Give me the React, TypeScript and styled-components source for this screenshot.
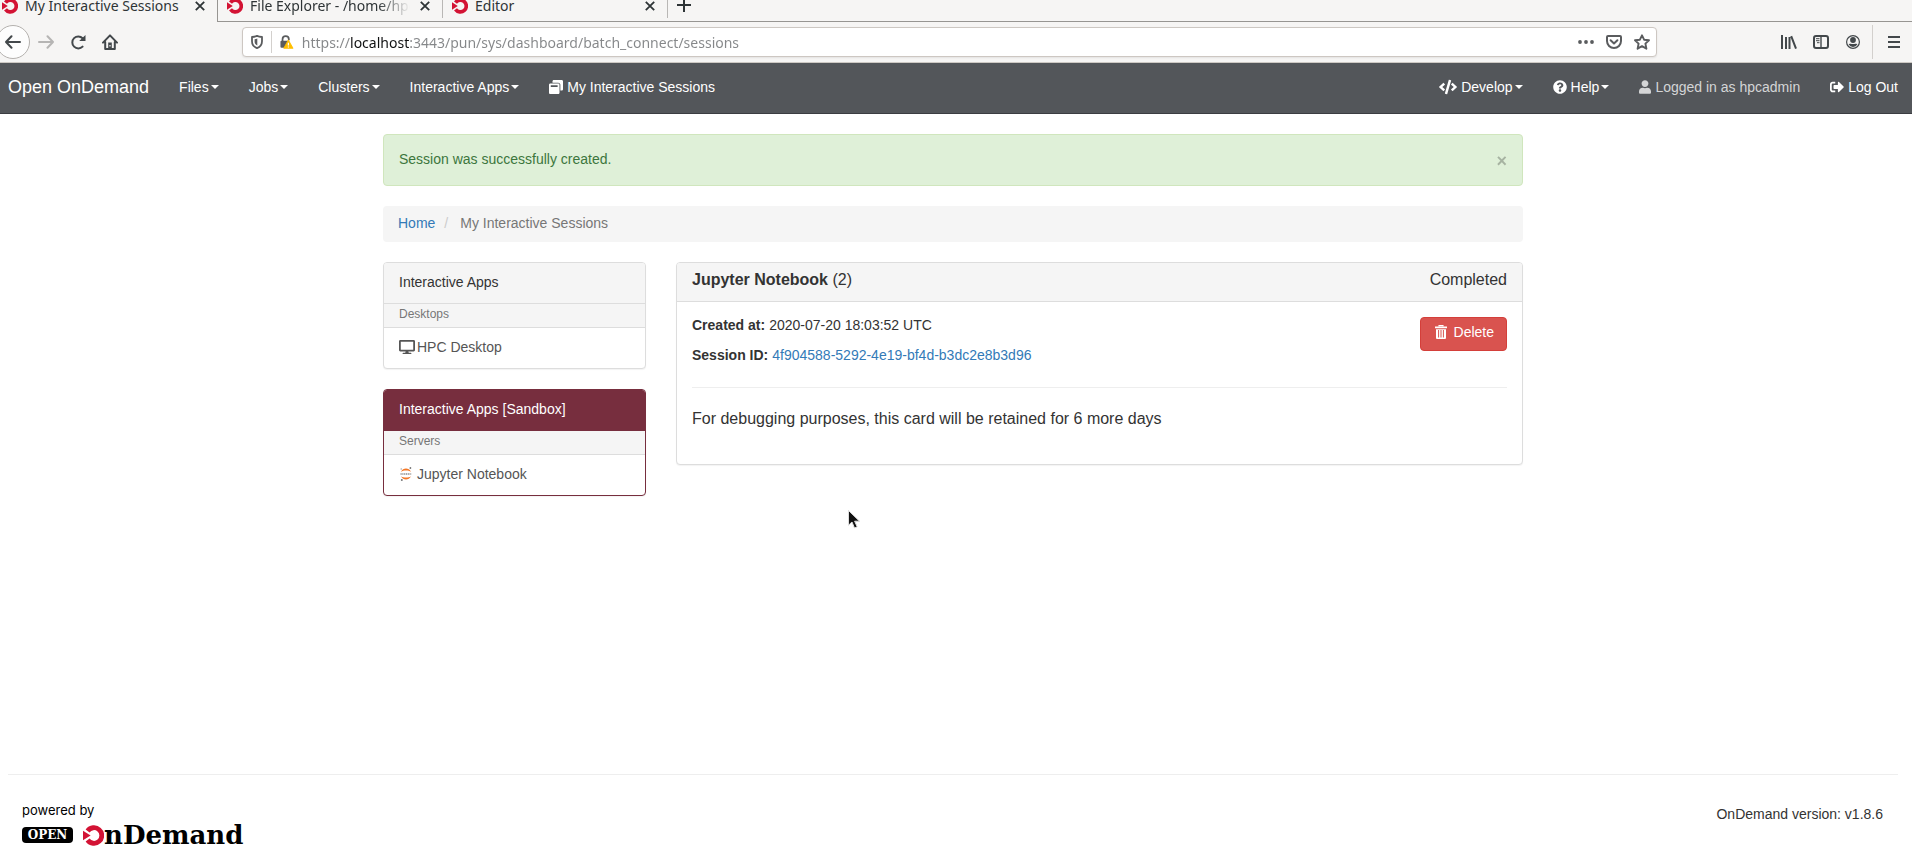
import React from "react";
import styled, { createGlobalStyle } from "styled-components";
import {
  FaCode,
  FaDesktop,
  FaQuestionCircle,
  FaSignOutAlt,
  FaUser,
  FaWindowRestore,
} from "react-icons/fa";

const GlobalStyle = createGlobalStyle`
  *, *::before, *::after { box-sizing: border-box; }
  body {
    margin: 0;
    background: #fff;
    color: #333;
    font-family: "Liberation Sans", Arial, sans-serif;
    font-size: 14px;
    line-height: 20px;
  }
  a { color: #337ab7; text-decoration: none; }
  svg { display: block; flex: none; }
  p, h1, h2, h3, ul, ol, dl, dd { margin: 0; padding: 0; list-style: none; }
  button, input { font: inherit; }
`;

const Shell = styled.div`
  position: relative;
  min-height: 100vh;
  display: flex;
  flex-direction: column;
`;

/* ---------- browser chrome ---------- */

const Chrome = styled.header`
  background: #f6f5f4;
  border-bottom: 1px solid #cdc9c4;
  color: #2e3436;
  font-family: "Noto Sans", "Open Sans", sans-serif;
  font-size: 14px;
`;

const TabStrip = styled.div`
  height: 22px;
  display: flex;
`;

const Tab = styled.div<{ $active?: boolean }>`
  position: relative;
  width: ${(p) => (p.$active ? 218 : 225)}px;
  padding: 0 10px 7px ${(p) => (p.$active ? 2 : 9)}px;
  display: flex;
  align-items: flex-end;
  gap: 7px;
  border-bottom: 1px solid ${(p) => (p.$active ? "transparent" : "#979592")};
  &::after {
    content: "";
    position: absolute;
    right: 0;
    top: 0;
    width: 1px;
    height: ${(p) => (p.$active ? 22 : 18)}px;
    background: ${(p) => (p.$active ? "#979592" : "#b9b7b5")};
  }
`;

const TabTitle = styled.span<{ $faded?: boolean }>`
  flex: 1;
  min-width: 0;
  white-space: nowrap;
  line-height: 20px;
  margin-bottom: -2px;
  ${(p) =>
    p.$faded
      ? "overflow: hidden; mask-image: linear-gradient(to right, #000 calc(100% - 32px), transparent);"
      : ""}
`;

const TabFill = styled.div`
  flex: 1;
  padding: 0 0 9px 8px;
  display: flex;
  align-items: flex-end;
  border-bottom: 1px solid #979592;
`;

const IconButton = styled.button<{ $w?: number; $h?: number }>`
  width: ${(p) => p.$w ?? 16}px;
  height: ${(p) => p.$h ?? 16}px;
  padding: 0;
  border: 0;
  background: none;
  color: inherit;
  display: flex;
  align-items: center;
  justify-content: center;
`;

const Toolbar = styled.div`
  height: 40px;
  padding-right: 8px;
  display: flex;
  align-items: center;
`;

const ToolGroup = styled.div<{ $gap: number }>`
  display: flex;
  align-items: center;
  gap: ${(p) => p.$gap}px;
`;

const BackButton = styled(IconButton)`
  border: 1px solid #b4b1ae;
  border-radius: 50%;
  background: #fdfdfd;
  margin-left: -4px;
`;

const Spring = styled.div`
  flex: 125 1 0;
`;

const UrlBar = styled.div`
  flex: 1413 1 0;
  height: 30px;
  padding: 0 6px 0 8px;
  display: flex;
  align-items: center;
  border: 1px solid #cdc7c2;
  border-radius: 4px;
  background: #fff;
  box-shadow: 0 1px 2px rgba(0, 0, 0, 0.08);
  color: #5a5c5e;
`;

const Divider = styled.span<{ $h: number }>`
  width: 1px;
  height: ${(p) => p.$h}px;
  background: #d3d0cd;
`;

const UrlInput = styled.input`
  flex: 1;
  min-width: 0;
  height: 24px;
  padding: 0;
  border: 0;
  outline: 0;
  color: transparent;
  background: linear-gradient(
    to right,
    #858789 48px,
    #101112 48px,
    #101112 107px,
    #858789 107px
  );
  background-clip: text;
  -webkit-background-clip: text;
`;

/* ---------- dashboard navigation ---------- */

const NavBar = styled.nav`
  height: 51px;
  padding: 0 14px 3px 8px;
  display: flex;
  align-items: center;
  background: #53565a;
  border-bottom: 1px solid #3b3d41;
  color: #fff;
`;

const Brand = styled.a`
  color: #fff;
  font-size: 18px;
  margin-right: 30px;
`;

const NavList = styled.ul`
  display: flex;
  gap: 30px;
  &:last-child {
    margin-left: auto;
  }
`;

const NavLink = styled.a`
  display: flex;
  align-items: center;
  gap: 4px;
  color: #fff;
  white-space: nowrap;
`;

const NavText = styled(NavLink).attrs({ as: "span" })`
  color: #d4d5d6;
`;

const UserIcon = styled(FaUser)`
  width: 12px;
  height: 14px;
`;

const Caret = styled.span`
  margin-left: -2px;
  border-top: 4px solid;
  border-left: 4px solid transparent;
  border-right: 4px solid transparent;
`;

/* ---------- page content ---------- */

const Main = styled.main`
  flex: 1;
  padding: 20px 6px 20px 0;
`;

const Container = styled.div`
  max-width: 1140px;
  margin: 0 auto;
  display: flex;
  flex-direction: column;
  gap: 20px;
`;

const Alert = styled.div`
  padding: 14px 15px 16px;
  display: flex;
  justify-content: space-between;
  border: 1px solid #d0e6bd;
  border-radius: 4px;
  background: #dff0d8;
  color: #3c763d;
`;

const CloseButton = styled.button`
  height: 20px;
  padding: 0;
  border: 0;
  background: none;
  color: #000;
  opacity: 0.25;
  font-size: 18px;
  font-weight: 700;
  line-height: 24px;
`;

const Breadcrumb = styled.ol`
  padding: 7px 15px 9px;
  display: flex;
  border-radius: 4px;
  background: #f5f5f5;
  color: #777;
  li + li::before {
    content: "/";
    color: #ccc;
    padding: 0 12px 0 9px;
  }
`;

const Columns = styled.div`
  display: grid;
  grid-template-columns: 263fr 847fr;
  gap: 30px;
  align-items: start;
`;

const Sidebar = styled.aside`
  display: flex;
  flex-direction: column;
  gap: 20px;
`;

const Panel = styled.section<{ $accent?: boolean }>`
  border: 1px solid ${(p) => (p.$accent ? "#772e3e" : "#ddd")};
  border-radius: 4px;
  box-shadow: 0 1px 1px rgba(0, 0, 0, 0.05);
  background: #fff;
  overflow: hidden;
`;

const PanelTitle = styled.h2<{ $accent?: boolean }>`
  padding: 9px 15px 11px;
  font-size: 14px;
  font-weight: 400;
  color: ${(p) => (p.$accent ? "#fff" : "#333")};
  background: ${(p) => (p.$accent ? "#772e3e" : "#f5f5f5")};
  border-bottom: 1px solid ${(p) => (p.$accent ? "#772e3e" : "#ddd")};
`;

const PanelGroup = styled.p`
  padding: 0 15px 3px;
  font-size: 12px;
  color: #777;
  background: #f5f5f5;
  border-bottom: 1px solid #ddd;
`;

const PanelLink = styled.a<{ $gap: number }>`
  padding: 9px 15px 11px;
  display: flex;
  align-items: center;
  gap: ${(p) => p.$gap}px;
  color: #555;
`;

const SessionHeader = styled.div`
  padding: 6px 15px 10px;
  display: flex;
  justify-content: space-between;
  font-size: 16px;
  line-height: 22px;
  background: #f5f5f5;
  border-bottom: 1px solid #ddd;
`;

const SessionTitle = styled.h3`
  font-size: 16px;
  font-weight: 400;
`;

const SessionBody = styled.div`
  padding: 13px 15px 34px;
`;

const SessionTop = styled.div`
  display: flex;
  justify-content: space-between;
  align-items: flex-start;
  padding-bottom: 22px;
  border-bottom: 1px solid #eee;
`;

const Details = styled.dl`
  display: grid;
  gap: 10px;
  div {
    display: flex;
    gap: 4px;
  }
  dt {
    font-weight: 700;
  }
`;

const DeleteButton = styled.button`
  height: 34px;
  margin-top: 2px;
  padding: 3px 12px 7px 14px;
  display: flex;
  align-items: center;
  gap: 7px;
  border: 1px solid #d43f3a;
  border-radius: 4px;
  background: #d9534f;
  color: #fff;
`;

const Note = styled.p`
  margin-top: 20px;
  font-size: 16px;
  line-height: 22px;
`;

const Footer = styled.footer`
  height: 90px;
  margin: 0 14px 0 8px;
  padding: 25px 15px 0 14px;
  display: flex;
  justify-content: space-between;
  align-items: flex-start;
  border-top: 1px solid #eee;
`;

const Powered = styled.a`
  display: grid;
  gap: 2px;
  color: #000;
  font-family: Inter, "Liberation Sans", sans-serif;
  font-size: 13px;
`;

const Logo = styled.span`
  display: flex;
  align-items: center;
  height: 26px;
  font-family: "DejaVu Serif", serif;
  font-size: 26px;
  font-weight: 700;
  svg {
    margin-left: 10px;
  }
`;

const LogoTag = styled.span`
  width: 51px;
  height: 16px;
  border-radius: 4px;
  background: #000;
  color: #fff;
  font-size: 12px;
  line-height: 16px;
  text-align: center;
`;

const Version = styled.p`
  padding-top: 4px;
`;

const Pointer = styled.svg`
  position: absolute;
  left: 848px;
  top: 510px;
`;

/* ---------- drawings ---------- */

const OnDemandMark = ({ size }: { size: number }) => (
  <svg width={size} height={size} viewBox="0 0 21 21" aria-hidden="true">
    <path d="M4.600 6A7.800 7.800 0 1 1 4.600 15" fill="none" stroke="#d31334" strokeWidth="4.8" />
    <path d="M0 5.700 7.600 10.500 0 15.300Z" fill="#d31334" />
  </svg>
);

const Cross = () => (
  <svg width="10" height="10" viewBox="0 0 10 10" stroke="currentColor" strokeWidth="1.8">
    <path d="M.8.8 9.2 9.2M9.2.8.8 9.2" />
  </svg>
);

const Plus = () => (
  <svg width="14" height="14" viewBox="0 0 14 14" stroke="currentColor" strokeWidth="2">
    <path d="M7 0V14M0 7H14" />
  </svg>
);

const Arrow = ({ flip }: { flip?: boolean }) => (
  <svg width="16" height="14" viewBox="0 0 16 14" fill="none" stroke={flip ? "#b6b5b4" : "#43484b"} strokeWidth="2" strokeLinecap="round" strokeLinejoin="round">
    <path d={flip ? "M1 7H15M9.5 1.2 15 7 9.5 12.8" : "M15 7H1M6.5 1.2 1 7 6.5 12.8"} />
  </svg>
);

const Reload = () => (
  <svg width="16" height="16" viewBox="0 0 16 16" fill="none" stroke="#43484b" strokeWidth="2">
    <path d="M12.600 12.600A6 6 0 1 1 12.600 4.200" strokeLinecap="round" />
    <path d="M15.500 1V7H9.200Z" fill="#43484b" stroke="none" />
  </svg>
);

const Home = () => (
  <svg width="16" height="16" viewBox="0 0 16 16" fill="none" stroke="#43484b" strokeWidth="2" strokeLinejoin="round" strokeLinecap="round">
    <path d="M1 8.600 8 1.400 15 8.600M3.200 8V15H12.800V8" />
    <path d="M8 8.500V15" strokeWidth="3.600" strokeLinecap="butt" />
    <path d="M8 11V12.500" stroke="#f6f5f4" strokeWidth="1.200" strokeLinecap="butt" />
  </svg>
);

const Shield = () => (
  <svg width="12" height="14" viewBox="0 0 12 14" fill="none" stroke="currentColor" strokeWidth="1.800">
    <path d="M6 .900C4.500 1.600 2.800 1.900 1 2V6.300C1 9.800 3 12 6 13.100C9 12 11 9.800 11 6.300V2C9.200 1.900 7.500 1.600 6 .900Z" strokeLinejoin="round" />
    <path d="M6.300 3.500C5.300 4 4.500 4.200 3.600 4.200V6.500C3.600 8.500 4.600 9.800 6.300 10.500Z" fill="currentColor" stroke="none" />
  </svg>
);

const Padlock = () => (
  <svg width="14" height="14" viewBox="1 0 15 16">
    <path d="M3.400 7V4.800A3.600 3.600 0 0 1 10.600 4.800V6" fill="none" stroke="#5a5c5e" strokeWidth="2" />
    <rect x="1" y="6.500" width="10" height="8" rx="1.200" fill="#5a5c5e" />
    <path d="M10 5.600 15.400 15.200H4.800Z" fill="#ffbf00" stroke="#ffbf00" strokeLinejoin="round" />
    <path d="M10.100 8.800V12M10.100 13V14.400" stroke="#fff" strokeWidth="1.400" />
  </svg>
);

const Dots = () => (
  <svg width="16" height="4" viewBox="0 0 16 4" fill="currentColor">
    <circle cx="2" cy="2" r="1.900" />
    <circle cx="8" cy="2" r="1.900" />
    <circle cx="14" cy="2" r="1.900" />
  </svg>
);

const Pocket = () => (
  <svg width="16" height="14" viewBox="0 0 16 14" fill="none" stroke="currentColor" strokeWidth="2" strokeLinejoin="round">
    <path d="M2 1H14A1 1 0 0 1 15 2V6A7 7 0 0 1 1 6V2A1 1 0 0 1 2 1Z" />
    <path d="M4.600 5.200 8 8.400 11.400 5.200" strokeLinecap="round" />
  </svg>
);

const Star = () => (
  <svg width="16" height="16" viewBox="0 0 16 16" fill="none" stroke="currentColor" strokeWidth="1.900" strokeLinejoin="round">
    <path d="M8 1.300 10.100 5.700 15 6.200 11.400 9.600 12.400 14.700 8 12.200 3.600 14.700 4.600 9.600 1 6.200 5.900 5.700Z" />
  </svg>
);

const Library = () => (
  <svg width="16" height="14" viewBox="0 0 16 14" stroke="#43484b" strokeWidth="2" fill="none">
    <path d="M1 0V14M5 2V14M8.500 2V14M10.200 1.200 15 13.600" />
  </svg>
);

const SidebarIcon = () => (
  <svg width="16" height="14" viewBox="0 0 16 14" fill="none" stroke="#43484b">
    <rect x="1" y="1" width="14" height="12" rx="2" strokeWidth="2" />
    <path d="M8 1V13" strokeWidth="1.400" />
    <path d="M3 3.700H6.500M3 5.700H6.500M4 7.700H6.500" />
  </svg>
);

const Account = () => (
  <svg width="14" height="14" viewBox="0 0 14 14">
    <circle cx="7" cy="7" r="6.400" fill="none" stroke="#43484b" strokeWidth="1.200" />
    <circle cx="7" cy="5" r="2.900" fill="#43484b" />
    <path d="M2.600 9.300C4.500 8.200 5.500 9 7 9C8.500 9 9.500 8.200 11.400 9.300A5 5 0 0 1 2.600 9.300Z" fill="#43484b" />
  </svg>
);

const Menu = () => (
  <svg width="12" height="12" viewBox="0 0 12 12" stroke="#43484b" strokeWidth="2">
    <path d="M0 1H12M0 6H12M0 11H12" />
  </svg>
);

const Trash = () => (
  <svg width="12" height="14" viewBox="0 0 12 14">
    <path d="M4 1.600V.600H8V1.600" fill="none" stroke="#fff" strokeWidth="1.100" />
    <path d="M0 1.500H12V3.200H0ZM1 4.200H11V13A1 1 0 0 1 10 14H2A1 1 0 0 1 1 13Z" fill="#fff" />
    <path d="M3.600 5V12.500M6 5V12.500M8.400 5V12.500" stroke="#d9534f" strokeWidth="1" />
  </svg>
);

const Jupyter = () => (
  <svg width="14" height="14" viewBox="0 0 14 14">
    <path d="M2 4.800C3.200 2.400 5 1.600 7 1.600S10.800 2.400 12 4.800C10.500 3.800 9 3.400 7 3.400S3.500 3.800 2 4.800Z" fill="#f37726" />
    <path d="M2 9.200C3.200 11.600 5 12.400 7 12.400S10.800 11.600 12 9.200C10.500 10.200 9 10.600 7 10.600S3.500 10.200 2 9.200Z" fill="#f37726" />
    <path d="M1.500 7H12.500" stroke="#8a8a8a" strokeWidth="1.600" strokeDasharray="1.200 .6" />
    <circle cx="11.400" cy="1" r=".9" fill="#767677" />
    <circle cx="2.200" cy="2" r=".7" fill="#9e9e9e" />
    <circle cx="2.800" cy="13" r="1" fill="#767677" />
  </svg>
);

/* ---------- data ---------- */

const menus = ["Files", "Jobs", "Clusters", "Interactive Apps"];

const apps = [
  { title: "Interactive Apps", group: "Desktops", name: "HPC Desktop", icon: <FaDesktop size={16} />, gap: 2, accent: false },
  { title: "Interactive Apps [Sandbox]", group: "Servers", name: "Jupyter Notebook", icon: <Jupyter />, gap: 4, accent: true },
];

export default function App() {
  return (
    <Shell>
      <GlobalStyle />
      <Chrome>
        <TabStrip>
          <Tab $active>
            <OnDemandMark size={16} />
            <TabTitle>My Interactive Sessions</TabTitle>
            <IconButton aria-label="Close tab"><Cross /></IconButton>
          </Tab>
          <Tab>
            <OnDemandMark size={16} />
            <TabTitle $faded>File Explorer - /home/hpcadmin</TabTitle>
            <IconButton aria-label="Close tab"><Cross /></IconButton>
          </Tab>
          <Tab>
            <OnDemandMark size={16} />
            <TabTitle>Editor</TabTitle>
            <IconButton aria-label="Close tab"><Cross /></IconButton>
          </Tab>
          <TabFill>
            <IconButton $h={14} aria-label="New tab"><Plus /></IconButton>
          </TabFill>
        </TabStrip>
        <Toolbar>
          <ToolGroup $gap={8}>
            <BackButton $w={34} $h={34} aria-label="Back"><Arrow /></BackButton>
            <ToolGroup $gap={16}>
              <IconButton aria-label="Forward" disabled><Arrow flip /></IconButton>
              <IconButton aria-label="Reload"><Reload /></IconButton>
              <IconButton aria-label="Home"><Home /></IconButton>
            </ToolGroup>
          </ToolGroup>
          <Spring />
          <UrlBar>
            <ToolGroup $gap={8}>
              <Shield />
              <Divider $h={22} />
              <Padlock />
              <span />
            </ToolGroup>
            <UrlInput aria-label="Address" defaultValue="https://localhost:3443/pun/sys/dashboard/batch_connect/sessions" />
            <ToolGroup $gap={12}>
              <IconButton aria-label="Page actions"><Dots /></IconButton>
              <IconButton aria-label="Save to Pocket"><Pocket /></IconButton>
              <IconButton aria-label="Bookmark"><Star /></IconButton>
            </ToolGroup>
          </UrlBar>
          <Spring />
          <ToolGroup $gap={11}>
            <ToolGroup $gap={16}>
              <IconButton aria-label="Library"><Library /></IconButton>
              <IconButton aria-label="Sidebars"><SidebarIcon /></IconButton>
              <IconButton aria-label="Account"><Account /></IconButton>
            </ToolGroup>
            <Divider $h={34} />
            <IconButton $w={20} aria-label="Menu"><Menu /></IconButton>
          </ToolGroup>
        </Toolbar>
      </Chrome>

      <NavBar>
        <Brand href="#">Open OnDemand</Brand>
        <NavList>
          {menus.map((label) => (
            <li key={label}>
              <NavLink href="#">{label}<Caret /></NavLink>
            </li>
          ))}
          <li>
            <NavLink href="#"><FaWindowRestore size={14} />My Interactive Sessions</NavLink>
          </li>
        </NavList>
        <NavList>
          <li><NavLink href="#"><FaCode size={18} />Develop<Caret /></NavLink></li>
          <li><NavLink href="#"><FaQuestionCircle size={14} />Help<Caret /></NavLink></li>
          <li><NavText><UserIcon />Logged in as hpcadmin</NavText></li>
          <li><NavLink href="#"><FaSignOutAlt size={14} />Log Out</NavLink></li>
        </NavList>
      </NavBar>

      <Main>
        <Container>
          <Alert role="alert">
            <p>Session was successfully created.</p>
            <CloseButton aria-label="Close">×</CloseButton>
          </Alert>
          <Breadcrumb>
            <li><a href="#">Home</a></li>
            <li>My Interactive Sessions</li>
          </Breadcrumb>
          <Columns>
            <Sidebar>
              {apps.map((app) => (
                <Panel key={app.title} $accent={app.accent}>
                  <PanelTitle $accent={app.accent}>{app.title}</PanelTitle>
                  <PanelGroup>{app.group}</PanelGroup>
                  <PanelLink href="#" $gap={app.gap}>{app.icon}{app.name}</PanelLink>
                </Panel>
              ))}
            </Sidebar>
            <Panel>
              <SessionHeader>
                <SessionTitle><b>Jupyter Notebook</b> (2)</SessionTitle>
                <span>Completed</span>
              </SessionHeader>
              <SessionBody>
                <SessionTop>
                  <Details>
                    <div><dt>Created at:</dt><dd>2020-07-20 18:03:52 UTC</dd></div>
                    <div><dt>Session ID:</dt><dd><a href="#">4f904588-5292-4e19-bf4d-b3dc2e8b3d96</a></dd></div>
                  </Details>
                  <DeleteButton><Trash />Delete</DeleteButton>
                </SessionTop>
                <Note>For debugging purposes, this card will be retained for 6 more days</Note>
              </SessionBody>
            </Panel>
          </Columns>
        </Container>
      </Main>

      <Footer>
        <Powered href="#">
          <span>powered by</span>
          <Logo>
            <LogoTag>OPEN</LogoTag>
            <OnDemandMark size={21} />
            <span>nDemand</span>
          </Logo>
        </Powered>
        <Version>OnDemand version: v1.8.6</Version>
      </Footer>

      <Pointer width="13" height="19" viewBox="0 0 13 19" aria-hidden="true">
        <path d="M.5.500V15.200L4 12 6.500 18 9.200 16.800 6.600 11.200H11.500Z" fill="#111" stroke="#ddd" />
      </Pointer>
    </Shell>
  );
}
